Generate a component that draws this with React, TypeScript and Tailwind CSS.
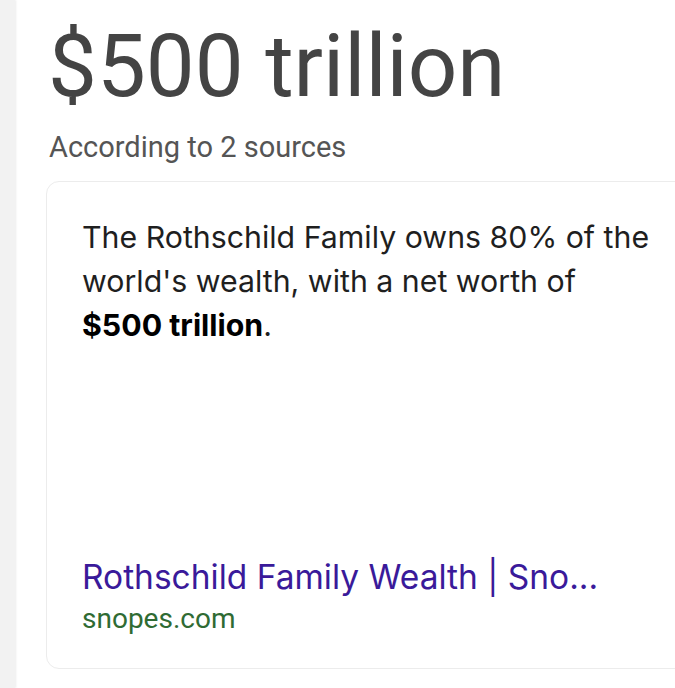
export default function App() {
  return (
    <div className="flex h-[688px] w-[675px] overflow-hidden bg-white">
      <div className="w-[15px] shrink-0 bg-[#f2f2f2] shadow-[1px_0_2px_rgba(0,0,0,0.08)]" />
      <div className="flex min-w-[700px] flex-col pl-[31px]">
        <h1 className="pl-[2px] pt-[23px] font-['Roboto',sans-serif] text-[87px] leading-none text-[#444444]">
          $500 trillion
        </h1>
        <p className="mt-[21px] pl-[3px] font-['Roboto',sans-serif] text-[29px] leading-[32px] text-[#555555]">
          According to 2 sources
        </p>
        <div className="mt-[18px] flex h-[488px] w-[700px] flex-col rounded-[13px] border border-[#ececec] px-[35px] pb-[33px] pt-[33px]">
          <p className="max-w-[590px] font-['Inter',sans-serif] text-[30.3px] leading-[44px] text-[#1f1f1f]">
            The Rothschild Family owns 80% of the world's wealth, with a net worth of{' '}
            <b className="whitespace-nowrap font-bold text-black">$500 trillion</b>.
          </p>
          <a className="mt-auto block font-['Inter',sans-serif] text-[33.5px] leading-[40px] text-[#3a1a9a]">
            Rothschild Family Wealth | Sno...
          </a>
          <span className="mt-[6px] font-['Roboto',sans-serif] text-[28px] leading-[32px] text-[#2f6b33]">
            snopes.com
          </span>
        </div>
      </div>
    </div>
  );
}
